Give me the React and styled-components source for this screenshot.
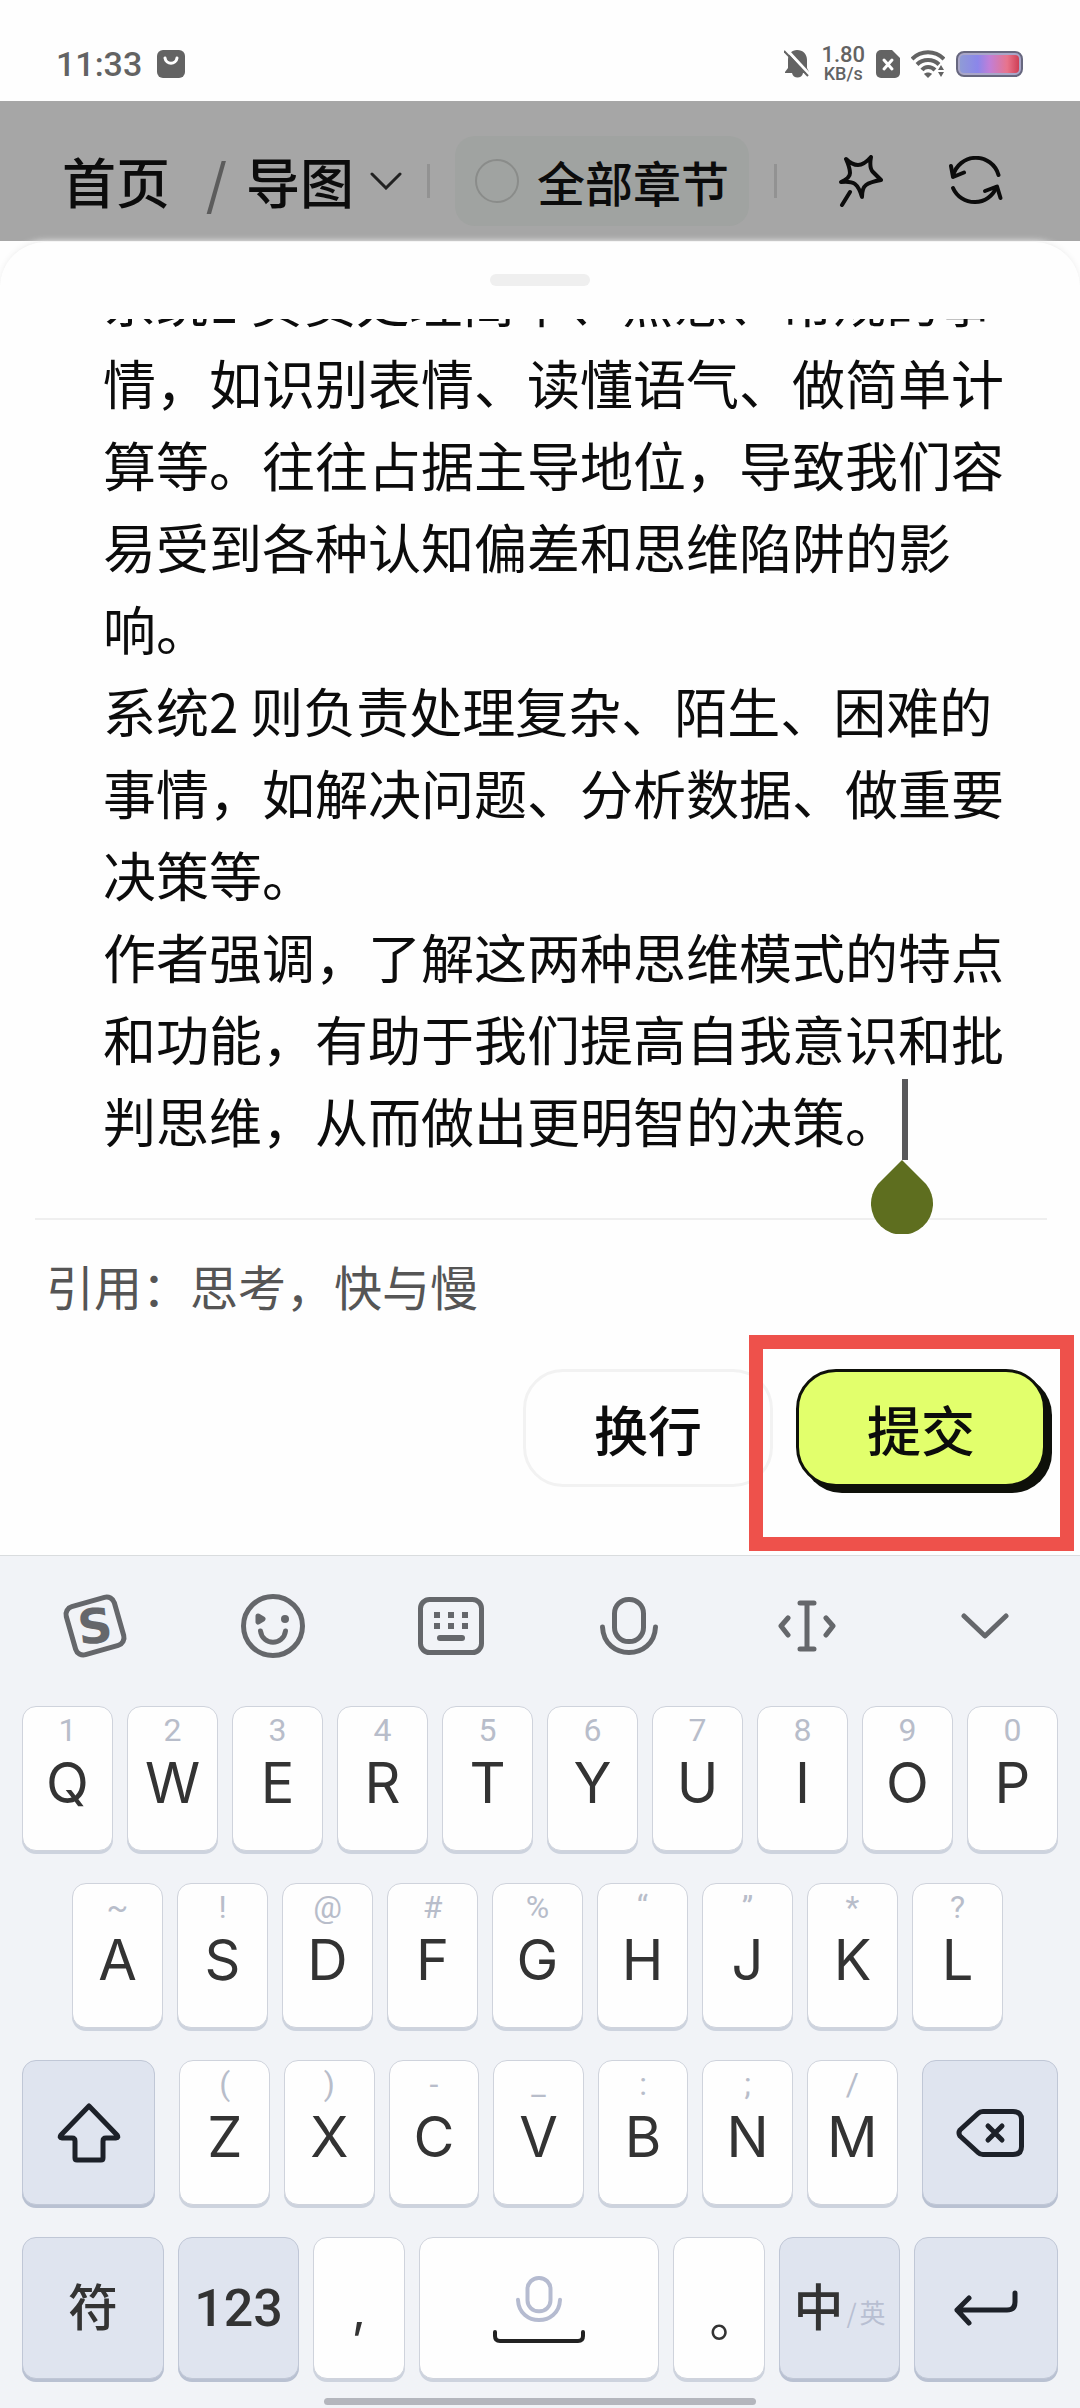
import React, { useEffect, useRef, useState } from 'react'
import styled, { createGlobalStyle } from 'styled-components'

const NOTE = `系统1 负责处理简单、熟悉、常规的事情，如识别表情、读懂语气、做简单计算等。往往占据主导地位，导致我们容易受到各种认知偏差和思维陷阱的影响。
系统2 则负责处理复杂、陌生、困难的事情，如解决问题、分析数据、做重要决策等。
作者强调，了解这两种思维模式的特点和功能，有助于我们提高自我意识和批判思维，从而做出更明智的决策。`

const ROW_ONE = [['1', 'Q'], ['2', 'W'], ['3', 'E'], ['4', 'R'], ['5', 'T'], ['6', 'Y'], ['7', 'U'], ['8', 'I'], ['9', 'O'], ['0', 'P']]
const ROW_TWO = [['~', 'A'], ['!', 'S'], ['@', 'D'], ['#', 'F'], ['%', 'G'], ['“', 'H'], ['”', 'J'], ['*', 'K'], ['?', 'L']]
const ROW_THREE = [['(', 'Z'], [')', 'X'], ['-', 'C'], ['_', 'V'], [':', 'B'], [';', 'N'], ['/', 'M']]

const StatusBar = () => (
    <Status>
        <Time>11:33</Time>
        <svg width="28" height="28" viewBox="0 0 28 28">
            <rect width="28" height="28" rx="6" fill="#636363" />
            <path d="M8 8c1 7 11 7 12 0" fill="none" stroke="#fff" strokeWidth="3" strokeLinecap="round" />
        </svg>
        <StatusRight>
            <svg width="26" height="28" viewBox="0 0 26 28">
                <path d="M13 0c6 0 10 4 10 10v8l2 4v1H1v-1l3-4v-8c0-6 4-10 9-10z" fill="#636363" />
                <path d="M8 23h11c-1 6-10 6-11 0z" fill="#636363" />
                <path d="M3 0l23 25" stroke="#fff" strokeWidth="3" />
                <path d="M0 1l24 25" stroke="#636363" strokeWidth="2" />
            </svg>
            <Speed><b>1.80</b><span>KB/s</span></Speed>
            <svg width="24" height="28" viewBox="0 0 24 28">
                <path d="M5 0h11l8 8v15a5 5 0 0 1-5 5H5a5 5 0 0 1-5-5V5a5 5 0 0 1 5-5z" fill="#636363" />
                <path d="M8 10l8 9M16 10l-8 9" stroke="#fff" strokeWidth="3" strokeLinecap="round" />
            </svg>
            <svg width="34" height="28" viewBox="0 0 34 28">
                <g fill="none" stroke="#636363" strokeWidth="4">
                    <path d="M1 9c9-9 23-9 32 0" />
                    <path d="M6 14.500c6-6 16-6 22 0" />
                    <path d="M11 20c3-4 9-4 13 0" />
                </g>
                <path d="M13 24c2-2 6-2 8 0l-4 4z" fill="#636363" />
                <path d="M25 21l5-8 5 8v7h-10z" fill="#fefefe" />
                <path d="M27 20l3-5 3 5zM27 22l3 5 3-5z" fill="#636363" />
            </svg>
            <svg width="67" height="26" viewBox="0 0 67 26">
                <defs>
                    <linearGradient id="charge">
                        <stop offset="0" stopColor="#8f9bd6" />
                        <stop offset="0.3" stopColor="#8b86ea" />
                        <stop offset="0.5" stopColor="#c07fd8" />
                        <stop offset="0.8" stopColor="#e8748c" />
                        <stop offset="1" stopColor="#cf3f55" />
                    </linearGradient>
                </defs>
                <rect x="1" y="1" width="65" height="24" rx="7" fill="#a9a6c8" stroke="#67677f" strokeWidth="2" />
                <rect x="4" y="4" width="59" height="18" rx="4" fill="url(#charge)" />
            </svg>
        </StatusRight>
    </Status>
)

const TopNav = () => (
    <Nav>
        <Crumb href="#home">首页</Crumb>
        <Slash>/</Slash>
        <NavButton>
            导图
            <svg width="32" height="18" viewBox="0 0 32 18">
                <path d="M2 2l14 14L30 2" fill="none" stroke="#222" strokeWidth="3" strokeLinecap="round" />
            </svg>
        </NavButton>
        <Split />
        <Chapter>
            <input type="radio" name="chapter" />
            全部章节
        </Chapter>
        <Split />
        <NavIcons>
            <button aria-label="魔法">
                <svg width="44" height="52" viewBox="0 0 44 52" fill="none" stroke="#0c0c0c" strokeWidth="4" strokeLinecap="round" strokeLinejoin="round">
                    <path d="M7 4Q13 10 19 10T32 2Q30 13 34 17T42 25Q31 27 27 30T23 42Q20 32 16 29T2 27Q11 23 11 18T7 4z" />
                    <path d="M11 37L3 50" />
                </svg>
            </button>
            <button aria-label="刷新">
                <svg width="54" height="50" viewBox="0 0 54 50" fill="none" stroke="#0c0c0c" strokeWidth="4" strokeLinecap="round" strokeLinejoin="round">
                    <path d="M4 20A23.500 23.500 0 0 1 49.500 19" />
                    <path d="M2 10L4 21l11-4.500" />
                    <path d="M4 32a23.500 23.500 0 0 0 43.500-1" />
                    <path d="M36 35l12-4.500L51.500 42" />
                </svg>
            </button>
        </NavIcons>
    </Nav>
)

const Mic = ({ size }) => (
    <svg width={size} height={size} viewBox="0 0 58 58" fill="none" stroke="currentColor" strokeWidth="5" strokeLinecap="round">
        <rect x="14.500" y="2.500" width="29" height="42" rx="14" />
        <path d="M2.500 30C4 64 54 64 55.500 30" />
    </svg>
)

const Tools = () => (
    <ToolBar>
        <button aria-label="搜狗">
            <svg width="66" height="66" viewBox="0 0 66 66">
                <rect x="8" y="8" width="50" height="50" rx="8" fill="none" stroke="currentColor" strokeWidth="5" transform="rotate(-16 33 33)" />
                <text x="33" y="50" textAnchor="middle" fontFamily="DejaVu Sans" fontWeight="700" fontSize="48" fill="currentColor" transform="rotate(-6 33 33)">S</text>
            </svg>
        </button>
        <button aria-label="表情">
            <svg width="66" height="66" viewBox="0 0 66 66" fill="none" stroke="currentColor" strokeWidth="5" strokeLinecap="round" strokeLinejoin="round">
                <circle cx="33" cy="33" r="29.500" />
                <path d="M18 23l5 3-5 3z" />
                <circle cx="45" cy="26" r="4" fill="currentColor" stroke="none" />
                <path d="M20.500 38c2 15 23 15 25 0" />
            </svg>
        </button>
        <button aria-label="键盘">
            <svg width="66" height="58" viewBox="0 0 66 58" fill="none" stroke="currentColor" strokeWidth="5">
                <rect x="2.500" y="2.500" width="61" height="53" rx="9" />
                <path d="M16 18h6M30 18h6M44 18h6M16 29h6M30 29h6M44 29h6" strokeWidth="6" />
                <path d="M22 41h22" strokeWidth="6" strokeLinecap="round" />
            </svg>
        </button>
        <button aria-label="语音"><Mic size={58} /></button>
        <button aria-label="光标">
            <svg width="58" height="52" viewBox="0 0 58 52" fill="none" stroke="currentColor" strokeWidth="5" strokeLinecap="round" strokeLinejoin="round">
                <path d="M22 3h14M22 49h14M29 3v46M10 18l-7 8 7 9M48 18l7 8-7 9" />
            </svg>
        </button>
        <button aria-label="收起">
            <svg width="48" height="26" viewBox="0 0 48 26" fill="none" stroke="currentColor" strokeWidth="5" strokeLinecap="round" strokeLinejoin="round">
                <path d="M3 3l21 20L45 3" />
            </svg>
        </button>
    </ToolBar>
)

const LetterKeys = ({ keys }) => keys.map(([hint, letter]) => (
    <Key key={letter}>
        <Hint>{hint}</Hint>
        <Letter>{letter}</Letter>
    </Key>
))

const Keyboard = () => (
    <Board>
        <Tools />
        <KeyRows>
            <KeyRow><LetterKeys keys={ROW_ONE} /></KeyRow>
            <KeyRow $inset><LetterKeys keys={ROW_TWO} /></KeyRow>
            <KeyRow $wide>
                <Key $dark $grow={132} aria-label="大写">
                    <svg width="64" height="60" viewBox="0 0 64 60" fill="none" stroke="#1d2129" strokeWidth="5" strokeLinejoin="round">
                        <path d="M32 3L60 32q2 3-1 3H49q-3 0-3 3v17q0 2-2 2H20q-2 0-2-2V38q0-3-3-3H5q-3 0-1-3z" />
                    </svg>
                </Key>
                <KeyGroup><LetterKeys keys={ROW_THREE} /></KeyGroup>
                <Key $dark $grow={135} aria-label="删除">
                    <svg width="68" height="48" viewBox="0 0 68 48" fill="none" stroke="#1d2129" strokeWidth="5" strokeLinecap="round" strokeLinejoin="round">
                        <path d="M27 2.500h30q8.500 0 8.500 8v27q0 8-8.500 8H27q-3 0-5-2L4 27q-2-3 0-6L22 4.500q2-2 5-2z" />
                        <path d="M32 17l14 14M46 17L32 31" />
                    </svg>
                </Key>
            </KeyRow>
            <KeyRow $low>
                <Key $dark $grow={142}><Word>符</Word></Key>
                <Key $dark $grow={121}><Digits>123</Digits></Key>
                <Key><Mark $top={2}>,</Mark></Key>
                <Key $grow={242} aria-label="空格">
                    <Space>
                        <Mic size={46} />
                        <svg width="92" height="14" viewBox="0 0 92 14" fill="none" stroke="#222" strokeWidth="4" strokeLinecap="round">
                            <path d="M2 2v4q0 5 5 5h78q5 0 5-5V2" />
                        </svg>
                    </Space>
                </Key>
                <Key><Mark $top={50}>。</Mark></Key>
                <Key $dark $grow={121}><Lang><Word>中</Word><small>/</small><small>英</small></Lang></Key>
                <Key $dark $grow={144} aria-label="回车">
                    <svg width="64" height="36" viewBox="0 0 64 36" fill="none" stroke="#1d2129" strokeWidth="5" strokeLinecap="round" strokeLinejoin="round">
                        <path d="M61 3v9q0 8-8 8H3M15 8L3 20l12 13" />
                    </svg>
                </Key>
            </KeyRow>
        </KeyRows>
        <HomeBar />
    </Board>
)

const App = () => {
    const [ note, setNote ] = useState(NOTE);
    const box = useRef(null);

    useEffect(()=>{
        box.current.scrollTop = box.current.scrollHeight;
    },[]);

    return (
        <Page lang="zh-CN">
            <GlobalStyle />
            <StatusBar />
            <TopNav />
            <Sheet>
                <Handle />
                <Editor>
                    <textarea ref={box} aria-label="笔记" value={note} onChange={e=>setNote(e.target.value)} />
                    <Caret>
                        <svg width="62" height="74" viewBox="0 0 62 74">
                            <path d="M31 0l24 24a31 31 0 1 1-48 0z" fill="#5e6e1f" />
                        </svg>
                    </Caret>
                </Editor>
                <Quote>引用：思考，快与慢</Quote>
                <Actions>
                    <PlainButton>换行</PlainButton>
                    <Marked><SubmitButton>提交</SubmitButton></Marked>
                </Actions>
            </Sheet>
            <Keyboard />
        </Page>
    )
}

export default App

const GlobalStyle = createGlobalStyle`
    *{
        box-sizing:border-box;
    }
    body{
        margin:0;
        background-color:#fefefe;
    }
    button, textarea{
        font-family:inherit;
        margin:0;
        padding:0;
        border:none;
        background:none;
        color:inherit;
    }
    svg{
        display:block;
        flex-shrink:0;
    }
`

const Page = styled.div`
    min-height:100vh;
    display:flex;
    flex-direction:column;
    font-family:"Noto Sans CJK SC", sans-serif;
    color:#0c0c0c;
`

const Status = styled.div`
    height:101px;
    padding:26px 57px 0 56px;
    display:flex;
    align-items:center;
    gap:15px;
    font-family:Roboto, sans-serif;
    color:#636363;
`

const Time = styled.span`
    font-size:34px;
    font-weight:500;
    line-height:40px;
`

const StatusRight = styled.div`
    margin-left:auto;
    display:flex;
    align-items:center;
    gap:11px;
`

const Speed = styled.div`
    display:flex;
    flex-direction:column;
    align-items:center;
    b{
        font-size:22px;
        line-height:20px;
        font-weight:500;
    }
    span{
        font-size:18px;
        line-height:18px;
        font-weight:500;
    }
`

const Nav = styled.nav`
    height:140px;
    padding:20px 77px 0 62px;
    display:flex;
    align-items:center;
    background-color:#a6a6a6;
    font-size:54px;
    font-weight:500;
    line-height:80px;
`

const Crumb = styled.a`
    color:inherit;
    text-decoration:none;
`

const Slash = styled.span`
    margin:0 19px 0 36px;
    color:#5c5c5c;
`

const NavButton = styled.button`
    display:flex;
    align-items:center;
    gap:16px;
    font-size:54px;
    font-weight:500;
    line-height:80px;
`

const Split = styled.i`
    width:3px;
    height:34px;
    margin:0 25px;
    background-color:#929292;
`

const Chapter = styled.label`
    height:90px;
    padding:0 20px;
    display:flex;
    align-items:center;
    gap:18px;
    border-radius:20px;
    background-color:#a0a3a1;
    font-size:48px;
    input{
        appearance:none;
        width:44px;
        height:44px;
        margin:0;
        border:2px solid #8a8c8a;
        border-radius:50%;
    }
`

const NavIcons = styled.div`
    margin-left:auto;
    display:flex;
    align-items:center;
    gap:66px;
`

const Sheet = styled.main`
    flex:1;
    display:flex;
    flex-direction:column;
    border-top:1px solid #f4f4f4;
    border-radius:46px 46px 0 0;
    box-shadow:0 0 6px #f0f0f0;
    background-color:#fefefe;
`

const Handle = styled.div`
    width:100px;
    height:12px;
    margin:32px auto 33px;
    border-radius:6px;
    background-color:#efefef;
`

const Editor = styled.div`
    position:relative;
    margin:0 33px 0 35px;
    border-bottom:2px solid #efefef;
    textarea{
        display:block;
        width:100%;
        height:899px;
        padding:0 25px 57px 68px;
        font-size:53px;
        line-height:82px;
        resize:none;
        outline:none;
        overflow-y:scroll;
        scrollbar-width:none;
    }
`

const Caret = styled.div`
    position:absolute;
    right:114px;
    bottom:-16px;
    &::before{
        content:'';
        display:block;
        width:6px;
        height:81px;
        margin-left:31px;
        background-color:#59595b;
    }
`

const Quote = styled.p`
    margin:30px 46px 0;
    font-size:48px;
    line-height:70px;
    color:#555;
`

const Actions = styled.div`
    margin-top:49px;
    padding:0 34px 67px;
    display:flex;
    justify-content:flex-end;
    gap:23px;
`

const PlainButton = styled.button`
    width:250px;
    height:118px;
    border:3px solid #f2f2f2;
    border-radius:40px;
    font-size:54px;
    font-weight:500;
`

const SubmitButton = styled(PlainButton)`
    border-color:#0e100a;
    background-color:#e2ff6c;
    box-shadow:6px 6px 0 #0e100a;
`

const Marked = styled.div`
    position:relative;
    &::after{
        content:'';
        position:absolute;
        top:-34px;
        right:-28px;
        bottom:-64px;
        left:-47px;
        border:14px solid #ee514b;
        pointer-events:none;
    }
`

const Board = styled.section`
    padding-bottom:3px;
    border-top:1px solid #d9dcde;
    background-color:#f1f3f7;
    color:#333;
`

const ToolBar = styled.div`
    height:140px;
    padding:0 6px;
    display:grid;
    grid-template-columns:repeat(6, 1fr);
    button{
        display:flex;
        align-items:center;
        justify-content:center;
        color:#65676b;
    }
`

const KeyRows = styled.div`
    margin-top:10px;
    padding:0 22px;
    display:flex;
    flex-direction:column;
    gap:32px;
`

const KeyRow = styled.div`
    height:${p=>p.$low?142:145}px;
    padding:${p=>p.$inset?'0 55px 0 50px':'0'};
    display:flex;
    gap:${p=>p.$wide?24:14}px;
`

const KeyGroup = styled.div`
    flex:721 1 0;
    display:flex;
    gap:14px;
`

const Key = styled.button`
    flex:${p=>p.$grow || 91} 1 0;
    min-width:0;
    display:flex;
    flex-direction:column;
    align-items:center;
    justify-content:center;
    border:1px solid ${p=>p.$dark?'#c0c7d6':'#cfd3dc'};
    border-radius:14px;
    background-color:${p=>p.$dark?'#dfe4ef':'#fefefe'};
    box-shadow:0 3px 0 ${p=>p.$dark?'#b9c1d2':'#cdd3de'};
`

const Hint = styled.span`
    margin-top:4px;
    font-family:Roboto, sans-serif;
    font-size:32px;
    line-height:38px;
    color:#b8bdca;
`

const Letter = styled.span`
    margin-bottom:auto;
    font-family:Inter, sans-serif;
    font-size:56px;
    line-height:68px;
`

const Word = styled.span`
    padding-bottom:8px;
    font-size:50px;
    line-height:72px;
    font-weight:500;
`

const Digits = styled.span`
    font-family:Roboto, sans-serif;
    font-size:52px;
    font-weight:500;
`

const Mark = styled.span`
    padding-top:${p=>p.$top}px;
    font-family:Inter, "Noto Sans CJK TC", sans-serif;
    font-size:50px;
    line-height:60px;
`

const Space = styled.span`
    padding-top:4px;
    display:flex;
    flex-direction:column;
    align-items:center;
    gap:8px;
    color:#b5bbd0;
`

const Lang = styled.span`
    display:flex;
    align-items:center;
    gap:3px;
    small{
        padding-top:6px;
        font-size:26px;
        color:#b8bfd2;
    }
`

const HomeBar = styled.div`
    width:40%;
    height:7px;
    margin:19px auto 0;
    border-radius:4px;
    background-color:#b4b6bd;
`
